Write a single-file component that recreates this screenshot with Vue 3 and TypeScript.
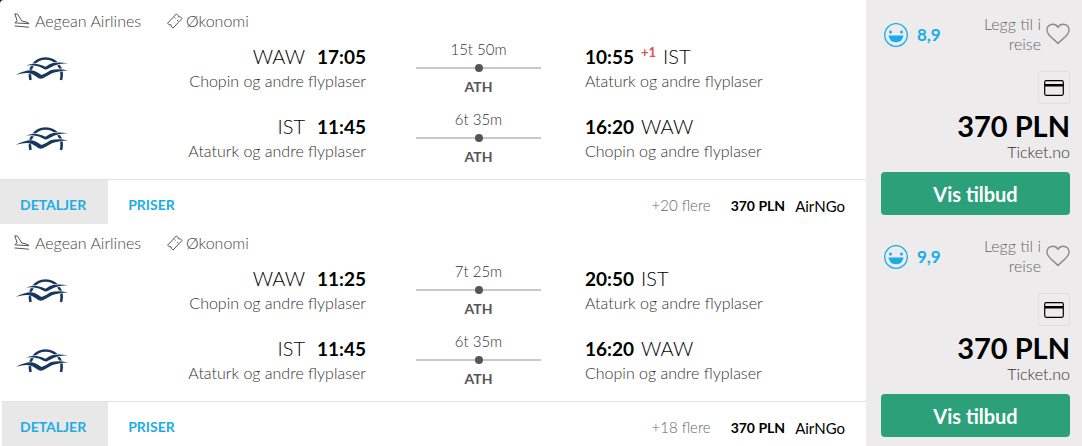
<script setup lang="ts">
interface Stop { time: string; code: string; name: string; dayShift?: string }
interface Leg { from: Stop; to: Stop; duration: string; via: string }
interface Offer {
  id: number
  airline: string
  cabin: string
  legs: Leg[]
  more: string
  otherPrice: string
  otherSeller: string
  score: string
  price: string
  seller: string
}

const chopin = 'Chopin og andre flyplaser'
const ataturk = 'Ataturk og andre flyplaser'

const homeLeg: Leg = {
  from: { time: '11:45', code: 'IST', name: ataturk },
  to: { time: '16:20', code: 'WAW', name: chopin },
  duration: '6t 35m',
  via: 'ATH',
}

const shared = {
  airline: 'Aegean Airlines',
  cabin: 'Økonomi',
  otherPrice: '370 PLN',
  otherSeller: 'AirNGo',
  price: '370 PLN',
  seller: 'Ticket.no',
}

const offers: Offer[] = [
  {
    ...shared,
    id: 1,
    legs: [
      {
        from: { time: '17:05', code: 'WAW', name: chopin },
        to: { time: '10:55', code: 'IST', name: ataturk, dayShift: '+1' },
        duration: '15t 50m',
        via: 'ATH',
      },
      homeLeg,
    ],
    more: '+20 flere',
    score: '8,9',
  },
  {
    ...shared,
    id: 2,
    legs: [
      {
        from: { time: '11:25', code: 'WAW', name: chopin },
        to: { time: '20:50', code: 'IST', name: ataturk },
        duration: '7t 25m',
        via: 'ATH',
      },
      homeLeg,
    ],
    more: '+18 flere',
    score: '9,9',
  },
]
</script>

<template>
  <main class="results">
    <article v-for="offer in offers" :key="offer.id" class="offer">
      <div class="trip">
        <header class="meta">
          <span class="airline">
            <svg width="16" height="16" viewBox="0 0 16 16" fill="none" stroke="#555" stroke-width="1" stroke-linejoin="round" stroke-linecap="round" aria-hidden="true">
              <path d="M1.200.8 3.600 1.200 7.800 8 13 9.200q1.800.5 2 1.500L3 10 .8 9.800 2.800 8Z" />
              <path d="M1 13 14.500 14.200" />
            </svg>
            {{ offer.airline }}
          </span>
          <span class="cabin">
            <svg width="16" height="16" viewBox="0 0 16 16" fill="none" stroke="#555" stroke-width="1" stroke-linejoin="round" aria-hidden="true">
              <path d="M9.500.8 11.200 2.500q-.5 1.800 1.300 1.500l.8-.3 1.700 1.800L6 15l-1.800-1.700q.6-1.900-1.300-1.700l-.8.2L.6 10.200Z" />
              <path d="m7.500 4.500 1 1m1.500 1.500 1 1" />
            </svg>
            {{ offer.cabin }}
          </span>
        </header>

        <section v-for="(leg, i) in offer.legs" :key="i" class="leg">
          <svg class="logo" width="52" height="26" viewBox="0 0 52 26" role="img" :aria-label="offer.airline">
            <path d="M14.500 24C12 12 19 2.500 29.500 2.500S48 12 45 24" fill="none" stroke="#17375f" stroke-width="2.600" />
            <g fill="#17375f" stroke="#fff" stroke-width="1.200" stroke-linejoin="round" paint-order="stroke">
              <path d="M10 9.500Q17 7 22 8.300 26 9 29.500 10.800 34 7.500 38 6.800 44 5.800 52 7.300 43 7.500 38 9.800L31 13.300Q28.500 14 26 12 20 8.500 10 9.500Z" />
              <path d="M0 18.800Q9 14 15.500 14.300 20 15 25.500 19 30 17.500 34.500 14.300 42 12 52 14.500 42 15 36 17.300L27 22.300Q23.500 23.500 20.500 20.700 16 17.300 11.500 17 7 16.800 0 18.800Z" />
            </g>
          </svg>
          <div class="stop from">
            <p class="line"><span>{{ leg.from.code }}</span><time>{{ leg.from.time }}</time></p>
            <p class="place">{{ leg.from.name }}</p>
          </div>
          <div class="route">
            <span class="duration">{{ leg.duration }}</span>
            <span class="track"><i class="dot"></i></span>
            <strong class="via">{{ leg.via }}</strong>
          </div>
          <div class="stop to">
            <p class="line">
              <time>{{ leg.to.time }}</time><sup v-if="leg.to.dayShift">{{ leg.to.dayShift }}</sup><span>{{ leg.to.code }}</span>
            </p>
            <p class="place">{{ leg.to.name }}</p>
          </div>
        </section>

        <footer class="bar">
          <button type="button" class="tab active">DETALJER</button>
          <button type="button" class="tab">PRISER</button>
          <span class="more">{{ offer.more }}</span>
          <a href="#" class="other"><strong>{{ offer.otherPrice }}</strong> <span>{{ offer.otherSeller }}</span></a>
        </footer>
      </div>

      <aside class="deal">
        <div class="top">
          <div class="score">
            <svg width="24" height="24" viewBox="0 0 24 24" aria-hidden="true">
              <circle cx="12" cy="12" r="11.300" fill="none" stroke="#16aee8" stroke-width="1.300" />
              <circle cx="6.500" cy="9" r="1.500" fill="#16aee8" />
              <circle cx="17.500" cy="9" r="1.500" fill="#16aee8" />
              <path d="M4.500 12.500h15q-1 6.700-7.500 6.700t-7.500-6.700Z" fill="#16aee8" />
            </svg>
            <strong>{{ offer.score }}</strong>
          </div>
          <button type="button" class="save">
            <span>Legg til i reise</span>
            <svg width="24" height="22" viewBox="0 0 24 22" fill="none" stroke="#8b8b8b" stroke-width="1.400" stroke-linejoin="round" aria-hidden="true">
              <path d="M12 4.300C9.500-.2 1 .2 1 7.200c0 5.300 6.500 8.300 11 13.300 4.500-5 11-8 11-13.300 0-7-8.500-7.400-11-2.900Z" />
            </svg>
          </button>
        </div>
        <button type="button" class="card" aria-label="Kort">
          <svg width="20" height="16" viewBox="0 0 20 16" aria-hidden="true">
            <rect x=".7" y=".7" width="18.600" height="14.600" rx="1.500" fill="none" stroke="#000" stroke-width="1.200" />
            <path d="M1 4h18v2.500H1Z" />
          </svg>
        </button>
        <strong class="price">{{ offer.price }}</strong>
        <span class="seller">{{ offer.seller }}</span>
        <button type="button" class="cta">Vis tilbud</button>
      </aside>
    </article>
  </main>
</template>

<style>
body {
  margin: 0;
  background: #1c1c28;
}
</style>

<style scoped>
.results {
  overflow: hidden;
  border-top-left-radius: 4px;
  background: #fff;
  color: #000;
  font-family: Lato, "Open Sans", sans-serif;
  font-size: 16px;
  line-height: 20px;
}
button {
  padding: 0;
  border: 0;
  background: none;
  color: inherit;
  font: inherit;
  cursor: pointer;
}
p {
  margin: 0;
}
.offer {
  display: grid;
  grid-template-columns: minmax(0, 1fr) 216px;
}
.offer:first-child .trip,
.offer:first-child .deal {
  padding-top: 2px;
}
.offer + .offer .bar {
  margin-left: 2px;
}
.offer + .offer .tab.active {
  padding-left: 18px;
}
.meta {
  display: flex;
  gap: 26px;
  height: 33px;
  padding: 0 14px 6px;
  box-sizing: border-box;
  color: #444;
  font-weight: 300;
}
.airline,
.cabin {
  display: flex;
  align-items: center;
  padding-top: 10px;
}
.airline {
  gap: 5px;
}
.cabin {
  gap: 3px;
}
.leg {
  display: grid;
  grid-template-columns: 52px 348fr 125px 325fr;
  height: 70px;
  padding: 0 0 0 16px;
}
.logo {
  margin-top: 21px;
}
.from {
  padding-right: 50px;
  text-align: right;
}
.to {
  padding-left: 44px;
}
.line {
  display: flex;
  height: 34px;
  padding-top: 10px;
  box-sizing: border-box;
  font-size: 19px;
  line-height: 24px;
}
.line span {
  font-size: 20px;
  line-height: 22px;
  font-weight: 300;
}
.from .line {
  justify-content: flex-end;
  gap: 12px;
}
.to .line {
  gap: 7px;
}
time {
  font-weight: 700;
}
sup {
  color: #d9534f;
  font-size: 13px;
  line-height: 14px;
  font-weight: 700;
}
.place {
  padding-top: 2px;
  color: #333;
  font-weight: 300;
}
.route {
  display: flex;
  flex-direction: column;
  align-items: center;
  padding-top: 4px;
}
.duration {
  color: #333;
  font-size: 15px;
  font-weight: 300;
}
.track {
  display: flex;
  align-items: center;
  justify-content: center;
  width: 100%;
  height: 2px;
  margin: 8px 0;
  background: #c8c8c8;
}
.dot {
  flex: none;
  width: 8px;
  height: 8px;
  border-radius: 50%;
  background: #555;
}
.via {
  color: #555;
  font-size: 14px;
}
.bar {
  display: flex;
  height: 45px;
  margin-top: 4px;
  padding-right: 21px;
  box-sizing: border-box;
  border-top: 1px solid #e2e2e2;
  align-items: center;
}
.tab {
  align-self: stretch;
  padding: 6px 20px 0;
  color: #1cade4;
  font-size: 14px;
  font-weight: 700;
}
.tab.active {
  padding-right: 22px;
  background: #e8e8e8;
}
.more {
  margin-left: auto;
  padding-top: 6px;
  color: #666;
  font-size: 15px;
  font-weight: 300;
}
.other {
  display: flex;
  gap: 10px;
  margin-left: 20px;
  padding-top: 7px;
  color: #000;
  font-size: 14px;
  text-decoration: none;
}
.other span {
  font-size: 15px;
}
.deal {
  display: flex;
  flex-direction: column;
  align-items: flex-end;
  padding: 0 12px 0 15px;
  background: #edebeb;
}
.top {
  display: flex;
  align-self: stretch;
  justify-content: space-between;
  height: 69px;
  padding: 12px 0 0 3px;
  box-sizing: border-box;
}
.score {
  display: flex;
  align-items: center;
  gap: 9px;
  height: 42px;
  color: #16aee8;
  font-size: 17px;
}
.save {
  display: flex;
  align-items: center;
  gap: 5px;
  height: 40px;
  color: #666;
  font-weight: 300;
  text-align: right;
}
.save span {
  width: 68px;
}
.card {
  display: grid;
  place-items: center;
  width: 32px;
  height: 33px;
  border: 1px solid #dfdddd;
  border-radius: 2px;
}
.price {
  margin-top: 6px;
  font-size: 29px;
  line-height: 32px;
}
.seller {
  color: #333;
  font-weight: 300;
}
.cta {
  align-self: stretch;
  height: 43px;
  margin-top: 10px;
  border-radius: 4px;
  background: #2ca078;
  color: #fff;
  font-size: 20px;
  font-weight: 700;
}
</style>
